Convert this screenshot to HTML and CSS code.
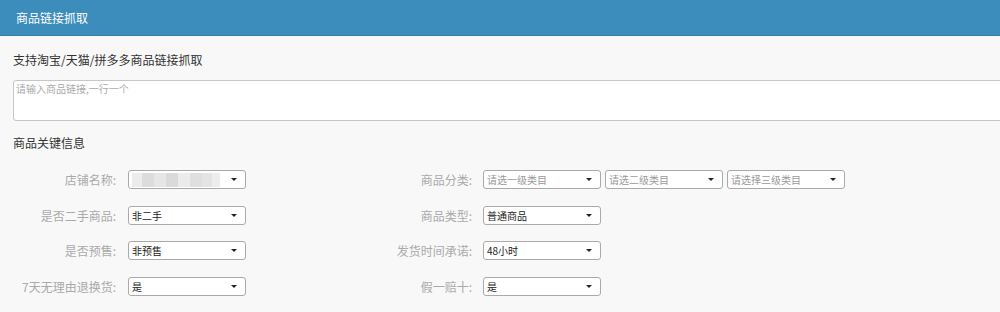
FILE: index.html
```html
<!DOCTYPE html>
<html lang="zh">
<head>
<meta charset="utf-8">
<title>商品链接抓取</title>
<link rel="stylesheet" href="styles.css">
</head>
<body>
<header class="topbar">商品链接抓取</header>
<main class="content">
  <h2 class="section-title first">支持淘宝/天猫/拼多多商品链接抓取</h2>
  <div class="textarea">请输入商品链接,一行一个</div>
  <h2 class="section-title second">商品关键信息</h2>
  <div class="form">
    <div class="row">
      <div class="field left">
        <label class="label">店铺名称:</label>
        <div class="select"><span class="blur"></span><span class="arrow"></span></div>
      </div>
      <div class="field right">
        <label class="label">商品分类:</label>
        <div class="select placeholder"><span class="text">请选一级类目</span><span class="arrow"></span></div>
        <div class="select placeholder gap"><span class="text">请选二级类目</span><span class="arrow"></span></div>
        <div class="select placeholder gap"><span class="text">请选择三级类目</span><span class="arrow"></span></div>
      </div>
    </div>
    <div class="row">
      <div class="field left">
        <label class="label">是否二手商品:</label>
        <div class="select"><span class="text">非二手</span><span class="arrow"></span></div>
      </div>
      <div class="field right">
        <label class="label">商品类型:</label>
        <div class="select"><span class="text">普通商品</span><span class="arrow"></span></div>
      </div>
    </div>
    <div class="row">
      <div class="field left">
        <label class="label">是否预售:</label>
        <div class="select"><span class="text">非预售</span><span class="arrow"></span></div>
      </div>
      <div class="field right">
        <label class="label">发货时间承诺:</label>
        <div class="select"><span class="text">48小时</span><span class="arrow"></span></div>
      </div>
    </div>
    <div class="row">
      <div class="field left">
        <label class="label">7天无理由退换货:</label>
        <div class="select"><span class="text">是</span><span class="arrow"></span></div>
      </div>
      <div class="field right">
        <label class="label">假一赔十:</label>
        <div class="select"><span class="text">是</span><span class="arrow"></span></div>
      </div>
    </div>
  </div>
</main>
</body>
</html>
```

FILE: styles.css
```css
* { box-sizing: border-box; }
html, body {
  margin: 0;
  padding: 0;
  background: #f8f8f8;
  font-family: "Noto Sans CJK SC", "Noto Sans", sans-serif;
  overflow: hidden;
}
.topbar {
  height: 36px;
  line-height: 35px;
  padding-left: 16px;
  background: #3c8dbc;
  border-bottom: 1px solid #367fa9;
  color: #fff;
  font-size: 12px;
}
.content {
  padding: 0 0 0 13px;
}
.section-title {
  margin: 0;
  font-size: 12px;
  font-weight: normal;
  color: #333;
  line-height: 16px;
}
.section-title.first { margin-top: 16px; }
.section-title.second { margin-top: 14px; }
.textarea {
  margin-top: 12px;
  width: 1000px;
  height: 41px;
  background: #fff;
  border: 1px solid #c3c6cb;
  border-radius: 3px;
  padding: 2px 2px;
  font-size: 10px;
  line-height: 12px;
  color: #aaa;
}
.form {
  margin-top: 19px;
  display: flex;
  flex-direction: column;
  gap: 16.5px;
}
.row {
  display: flex;
  align-items: center;
  height: 19px;
}
.field {
  display: flex;
  align-items: center;
}
.field.left { width: 339px; }
.label {
  text-align: right;
  font-size: 12px;
  color: #aaa;
  white-space: nowrap;
}
.left .label { width: 115px; padding-right: 12px; }
.right .label { width: 131px; padding-right: 11px; }
.select {
  position: relative;
  width: 118px;
  height: 19px;
  background: #fff;
  border: 1px solid #aaa;
  border-radius: 3px;
  display: flex;
  align-items: center;
  padding-left: 3px;
  font-size: 10px;
  color: #222;
}
.select.gap { margin-left: 4px; }
.select.placeholder .text { color: #999; }
.text { line-height: 17px; }
.blur {
  width: 88px;
  height: 14px;
  background:
    linear-gradient(90deg, #ececec 0 10px, #dcdcdc 10px 22px, #e6e6e6 22px 34px, #dadada 34px 46px, #ebebeb 46px 58px, #dfdfdf 58px 70px, #e4e4e4 70px 80px, #ededed 80px 88px);
}
.arrow {
  position: absolute;
  right: 8px;
  top: 7px;
  width: 0;
  height: 0;
  border-left: 3px solid transparent;
  border-right: 3px solid transparent;
  border-top: 3px solid #222;
}
```
